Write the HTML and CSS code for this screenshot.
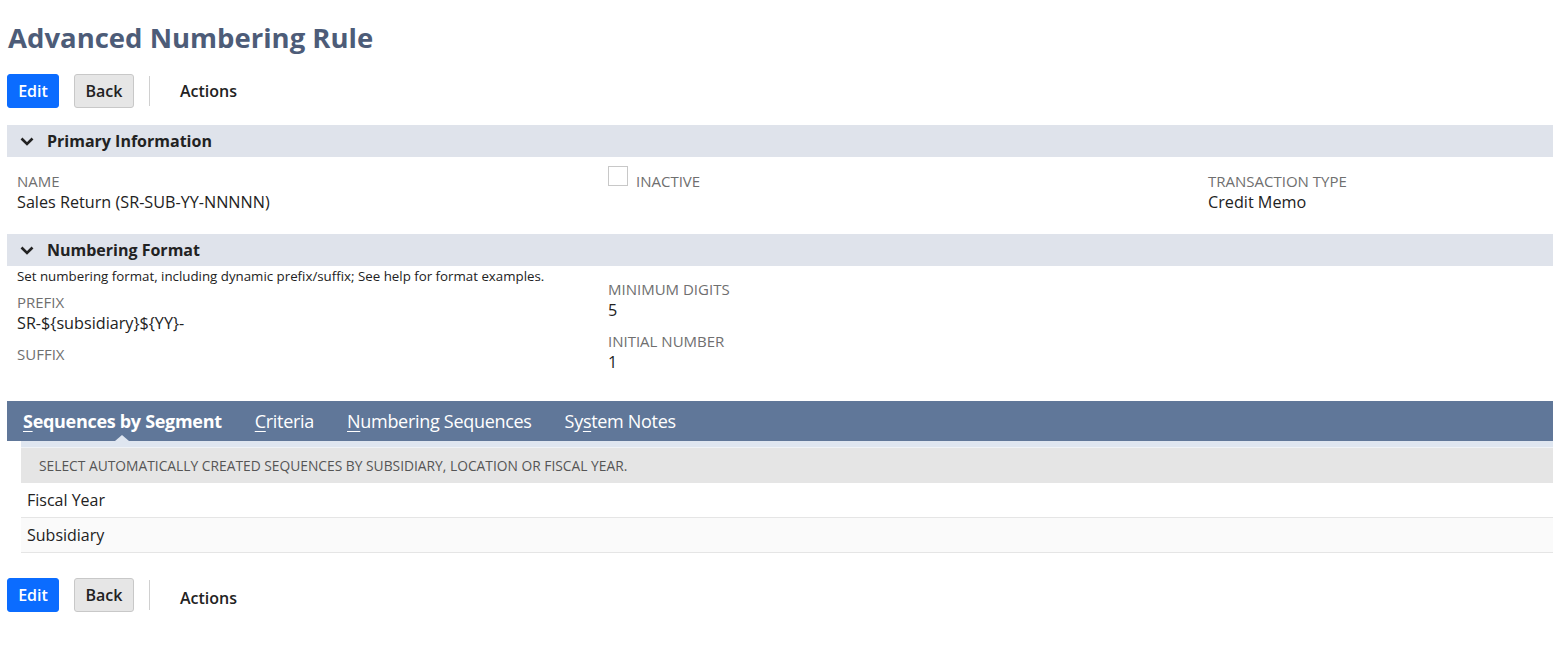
FILE: index.html
```html
<!DOCTYPE html>
<html lang="en">
<head>
    <meta charset="UTF-8">
    <title>Advanced Numbering Rule</title>
    <link rel="stylesheet" href="styles.css">
</head>
<body>
    <h1 class="page-title">Advanced Numbering Rule</h1>

    <div class="button-bar">
        <button class="btn btn-primary">Edit</button>
        <button class="btn btn-secondary">Back</button>
        <span class="divider"></span>
        <span class="actions">Actions</span>
    </div>

    <div class="section-header">
        <svg class="chevron" viewBox="0 0 14 9" width="14" height="9"><path d="M1.5 1.5 L7 7 L12.5 1.5" fill="none" stroke="#222" stroke-width="2.6"/></svg>
        <span>Primary Information</span>
    </div>
    <div class="field-grid primary">
        <div class="field">
            <div class="label">NAME</div>
            <div class="value">Sales Return (SR-SUB-YY-NNNNN)</div>
        </div>
        <div class="field checkbox-field">
            <span class="checkbox"></span>
            <span class="label">INACTIVE</span>
        </div>
        <div class="field">
            <div class="label">TRANSACTION TYPE</div>
            <div class="value">Credit Memo</div>
        </div>
    </div>

    <div class="section-header second">
        <svg class="chevron" viewBox="0 0 14 9" width="14" height="9"><path d="M1.5 1.5 L7 7 L12.5 1.5" fill="none" stroke="#222" stroke-width="2.6"/></svg>
        <span>Numbering Format</span>
    </div>
    <div class="field-grid format">
        <div class="col">
            <div class="help-text">Set numbering format, including dynamic prefix/suffix; See help for format examples.</div>
            <div class="field">
                <div class="label">PREFIX</div>
                <div class="value">SR-${subsidiary}${YY}-</div>
            </div>
            <div class="field">
                <div class="label">SUFFIX</div>
                <div class="value"></div>
            </div>
        </div>
        <div class="col col-offset">
            <div class="field">
                <div class="label">MINIMUM DIGITS</div>
                <div class="value">5</div>
            </div>
            <div class="field">
                <div class="label">INITIAL NUMBER</div>
                <div class="value">1</div>
            </div>
        </div>
    </div>

    <div class="tab-bar">
        <span class="tab active"><u>S</u>equences by Segment</span>
        <span class="tab"><u>C</u>riteria</span>
        <span class="tab"><u>N</u>umbering Sequences</span>
        <span class="tab">Sy<u>s</u>tem Notes</span>
    </div>
    <div class="tab-content">
        <div class="tab-strip"></div>
        <div class="list-header">SELECT AUTOMATICALLY CREATED SEQUENCES BY SUBSIDIARY, LOCATION OR FISCAL YEAR.</div>
        <div class="list-row">Fiscal Year</div>
        <div class="list-row alt">Subsidiary</div>
    </div>

    <div class="button-bar bottom">
        <button class="btn btn-primary">Edit</button>
        <button class="btn btn-secondary">Back</button>
        <span class="divider"></span>
        <span class="actions">Actions</span>
    </div>
</body>
</html>
```

FILE: styles.css
```css
body {
    margin: 0;
    padding: 0 0 0 7px;
    font-family: "Open Sans", Arial, sans-serif;
    color: #222;
    background: white;
}
.page-title {
    margin: 0;
    padding: 20px 0 0 1px;
    height: 54px;
    box-sizing: border-box;
    font-size: 27.5px;
    font-weight: 700;
    color: #4d5c78;
    line-height: 36px;
}
.button-bar {
    display: flex;
    align-items: center;
    height: 34px;
    margin-top: 20px;
}
.button-bar.bottom { margin-top: 25px; }
.button-bar.bottom .actions { padding-top: 6px; }
.btn {
    height: 34px;
    border-radius: 3px;
    font-family: "Open Sans", Arial, sans-serif;
    font-size: 16px;
    font-weight: 600;
    padding: 0 10px;
    margin-right: 15px;
    cursor: pointer;
}
.btn-primary {
    background: #0b6cff;
    border: 1px solid #0b6cff;
    color: white;
    width: 52px;
}
.btn-secondary {
    background: #e6e6e6;
    border: 1px solid #c8c8c8;
    color: #222;
    width: 60px;
}
.divider {
    width: 1px;
    height: 30px;
    background: #d0d0d0;
}
.actions {
    margin-left: 30px;
    font-size: 16px;
    font-weight: 600;
    color: #222;
}
.section-header {
    display: flex;
    align-items: center;
    height: 32px;
    margin-top: 17px;
    background: #dfe3eb;
    font-size: 16px;
    font-weight: 700;
    color: #222;
}
.section-header.second { margin-top: 11px; }
.chevron { margin: 0 13px 0 13px; }
.field-grid {
    display: grid;
    grid-template-columns: 591px 600px 1fr;
    padding-left: 10px;
}
.field-grid.primary { padding-top: 14px; }
.field-grid.format { grid-template-columns: 591px 1fr; }
.col-offset { padding-top: 13px; }
.field { margin-bottom: 10px; }
.label {
    font-size: 15px;
    color: #6f6f6f;
    line-height: 20px;
}
.value {
    font-size: 16.2px;
    color: #222;
    line-height: 22px;
}
.checkbox-field {
    display: flex;
    align-items: flex-start;
}
.checkbox {
    width: 20px;
    height: 20px;
    border: 1px solid #c8c8c8;
    box-sizing: border-box;
    margin: -5px 8px 0 0;
}
.help-text {
    font-size: 13.3px;
    color: #222;
    padding-top: 1px;
    line-height: 18px;
    margin-bottom: 7px;
    white-space: nowrap;
}
.field-grid.format .field:last-child { margin-bottom: 0; }
.tab-bar {
    display: flex;
    align-items: center;
    height: 40px;
    margin-top: 28px;
    background: #607799;
    padding-left: 16px;
}
.tab {
    font-size: 18px;
    color: white;
    margin-right: 33px;
    letter-spacing: -0.3px;
    position: relative;
    line-height: 40px;
}
.tab.active { font-weight: 700; }
.tab.active::after {
    content: "";
    position: absolute;
    left: 50%;
    bottom: 0;
    margin-left: -7px;
    border-left: 7px solid transparent;
    border-right: 7px solid transparent;
    border-bottom: 6px solid #dfe6f0;
}
.tab u { text-decoration-thickness: 1px; text-underline-offset: 3px; }
.tab-content { margin-left: 14px; }
.tab-strip {
    height: 6px;
    background: #dfe6f0;
    border-bottom: 1px solid #f0f3f7;
}
.list-header {
    height: 35px;
    line-height: 35px;
    background: #e5e5e5;
    font-size: 13.8px;
    color: #555;
    padding-left: 18px;
}
.list-row {
    height: 34px;
    line-height: 34px;
    font-size: 16px;
    color: #222;
    padding-left: 6px;
    border-bottom: 1px solid #e5e5e5;
    background: white;
}
.list-row.alt { background: #fafafa; }
```
